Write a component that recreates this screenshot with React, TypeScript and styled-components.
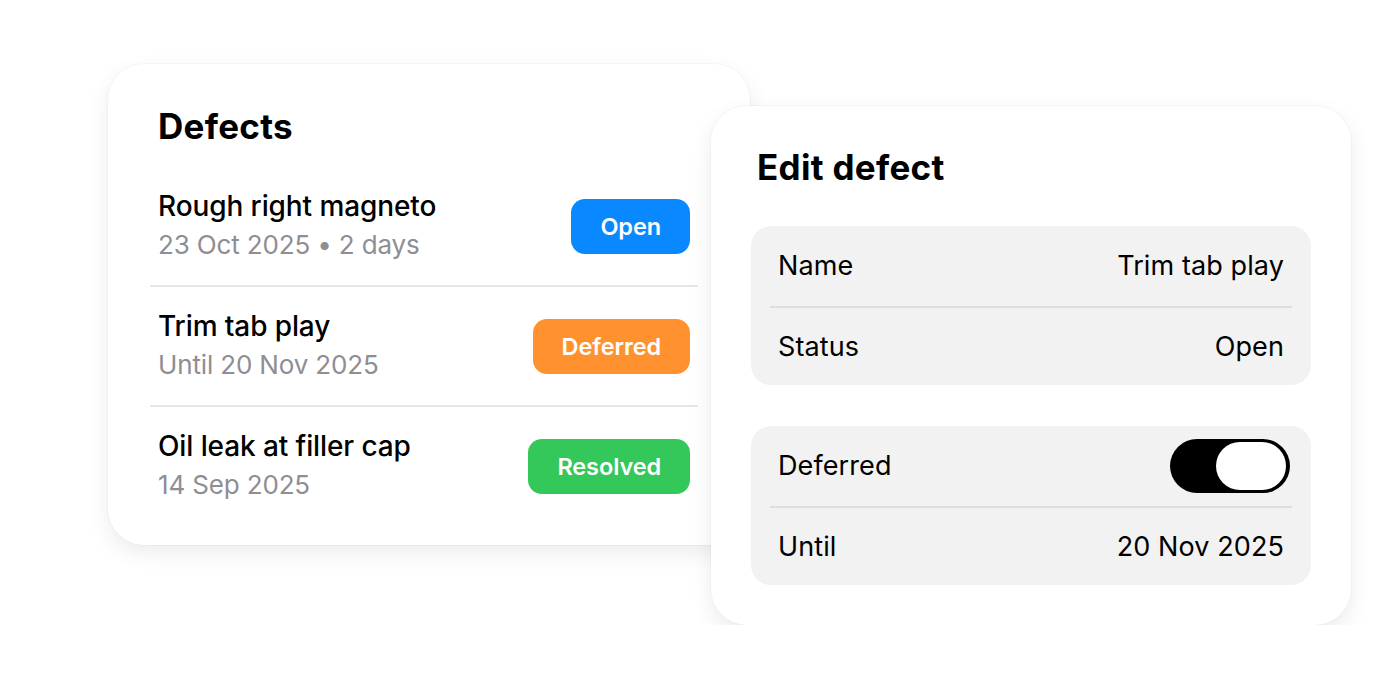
import React from "react";
import styled, { createGlobalStyle } from "styled-components";

const Global = createGlobalStyle`
  html, body { margin: 0; padding: 0; background: #ffffff; }
  body { font-family: Inter, "Noto Sans", "Liberation Sans", sans-serif; color: #000; -webkit-font-smoothing: antialiased; }
`;

const Stage = styled.div`
  display: flex;
  align-items: flex-start;
  padding: 64px 0 0 108px;
`;

const Card = styled.div`
  box-sizing: border-box;
  background: #fff;
  border-radius: 36px;
  box-shadow: 0 0 0 1px rgba(0, 0, 0, 0.025), 0 8px 22px rgba(0, 0, 0, 0.08);
  display: flex;
  flex-direction: column;
`;

const ListCard = styled(Card)`
  width: 642px;
  height: 481px;
  padding: 42px 52px 20px 42px;
`;

const EditCard = styled(Card)`
  position: relative;
  width: 640px;
  height: 519px;
  margin: 42px 0 0 -39px;
  padding: 41px 40px 40px 40px;
`;

const Title = styled.h1<{ $inset: number }>`
  margin: 0;
  padding: 0 ${(p) => p.$inset}px;
  font-size: 35px;
  line-height: 40px;
  font-weight: 700;
  letter-spacing: 0.3px;
`;

const List = styled.div`
  margin-top: 21px;
  display: flex;
  flex-direction: column;
`;

const Row = styled.div`
  height: 118px;
  padding: 0 8px;
  display: flex;
  align-items: center;
  justify-content: space-between;
  & + & {
    border-top: 2px solid #e6e6e6;
  }
`;

const Texts = styled.div`
  display: flex;
  flex-direction: column;
  gap: 8px;
  margin-bottom: 2px;
`;

const RowTitle = styled.div`
  font-size: 28px;
  line-height: 32px;
  font-weight: 500;
  letter-spacing: -0.1px;
`;

const RowSub = styled.div`
  font-size: 26px;
  line-height: 30px;
  color: #8e8e93;
  letter-spacing: -0.15px;
`;

const Badge = styled.div<{ $color: string }>`
  height: 55px;
  box-sizing: border-box;
  padding: 0 29px;
  margin-top: 1px;
  border-radius: 14px;
  background: ${(p) => p.$color};
  color: #fff;
  font-size: 23.5px;
  font-weight: 600;
  letter-spacing: -0.1px;
  display: flex;
  align-items: center;
  justify-content: center;
`;

const Group = styled.div<{ $top: number }>`
  margin-top: ${(p) => p.$top}px;
  background: #f2f2f2;
  border-radius: 20px;
  padding: 0 19px;
  display: flex;
  flex-direction: column;
`;

const Field = styled.div`
  height: 79.5px;
  box-sizing: border-box;
  padding: 0 8px;
  display: flex;
  align-items: center;
  justify-content: space-between;
  font-size: 27px;
  letter-spacing: 0.1px;
  & + & {
    border-top: 2px solid #dedede;
  }
`;

const Toggle = styled.div`
  width: 120px;
  height: 54px;
  box-sizing: border-box;
  margin-right: -6px;
  border-radius: 27px;
  background: #000;
  padding: 3px 4px 3px 3px;
  display: flex;
  justify-content: flex-end;
`;

const Knob = styled.div`
  width: 70px;
  height: 48px;
  border-radius: 24px;
  background: #fff;
`;

const defects = [
  { title: "Rough right magneto", sub: "23 Oct 2025 • 2 days", status: "Open", color: "#0a88ff" },
  { title: "Trim tab play", sub: "Until 20 Nov 2025", status: "Deferred", color: "#ff922e" },
  { title: "Oil leak at filler cap", sub: "14 Sep 2025", status: "Resolved", color: "#34c759" },
];

export default function App() {
  return (
    <>
      <Global />
      <Stage>
        <ListCard>
          <Title $inset={8}>Defects</Title>
          <List>
            {defects.map((d) => (
              <Row key={d.title}>
                <Texts>
                  <RowTitle>{d.title}</RowTitle>
                  <RowSub>{d.sub}</RowSub>
                </Texts>
                <Badge $color={d.color}>{d.status}</Badge>
              </Row>
            ))}
          </List>
        </ListCard>
        <EditCard>
          <Title $inset={6}>Edit defect</Title>
          <Group $top={39}>
            <Field>
              <span>Name</span>
              <span>Trim tab play</span>
            </Field>
            <Field>
              <span>Status</span>
              <span>Open</span>
            </Field>
          </Group>
          <Group $top={41}>
            <Field>
              <span>Deferred</span>
              <Toggle>
                <Knob />
              </Toggle>
            </Field>
            <Field>
              <span>Until</span>
              <span>20 Nov 2025</span>
            </Field>
          </Group>
        </EditCard>
      </Stage>
    </>
  );
}
